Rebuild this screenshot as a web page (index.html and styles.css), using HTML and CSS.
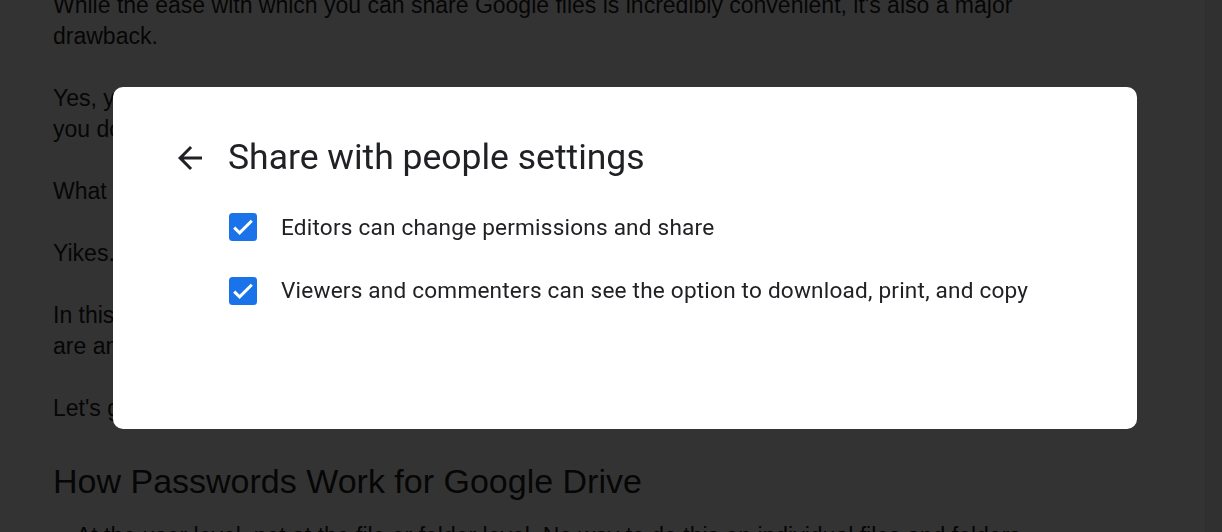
FILE: index.html
```html
<!DOCTYPE html>
<html lang="en">
<head>
<meta charset="utf-8">
<title>Share with people settings</title>
<link rel="stylesheet" href="styles.css">
</head>
<body>
<div class="page">
  <main class="article">
    <p>While the ease with which you can share Google files is incredibly convenient, it's also a major drawback.</p>
    <p>Yes, you can limit who has access to files and folders, but there's no password option, so if<br>you don't watch your sharing settings, anyone with the link might see your documents.</p>
    <p>What happens when someone forwards a link to a confidential file?</p>
    <p>Yikes.</p>
    <p>In this guide, we'll walk through how Google Drive handles security and the workarounds<br>are and aren't worth your time.</p>
    <p>Let's get started.</p>
    <h2>How Passwords Work for Google Drive</h2>
    <ul>
      <li>At the user level, not at the file or folder level. No way to do this on individual files and folders.</li>
    </ul>
  </main>
  <div class="scrolltrack"></div>
</div>

<div class="overlay"></div>

<section class="dialog" role="dialog" aria-labelledby="dlg-title">
  <header class="dialog-head">
    <button class="back" aria-label="Back">
      <svg viewBox="0 0 24 24" width="36" height="36"><path d="M20 11H7.83l5.59-5.59L12 4l-8 8 8 8 1.41-1.41L7.83 13H20v-2z" fill="#202124"/></svg>
    </button>
    <h1 id="dlg-title" class="dialog-title">Share with people settings</h1>
  </header>
  <div class="options">
    <label class="option">
      <svg class="check" viewBox="0 0 28 28" width="28" height="28"><rect x="0" y="0" width="28" height="28" rx="3.5" fill="#1a73e8"/><polyline points="5.2,14.6 10.6,19.8 22.8,7.8" fill="none" stroke="#fff" stroke-width="3"/></svg>
      <span>Editors can change permissions and share</span>
    </label>
    <label class="option">
      <svg class="check" viewBox="0 0 28 28" width="28" height="28"><rect x="0" y="0" width="28" height="28" rx="3.5" fill="#1a73e8"/><polyline points="5.2,14.6 10.6,19.8 22.8,7.8" fill="none" stroke="#fff" stroke-width="3"/></svg>
      <span>Viewers and commenters can see the option to download, print, and copy</span>
    </label>
  </div>
</section>
</body>
</html>
```

FILE: styles.css
```css
html, body {
  margin: 0;
  padding: 0;
  height: 100%;
  overflow: hidden;
  background: #fff;
}

.page {
  display: flex;
  height: 100vh;
}

.article {
  flex: 1;
  padding-left: 53px;
  margin-top: -10px;
  font-family: "Liberation Sans", Arial, sans-serif;
  font-size: 23px;
  line-height: 31px;
  color: #222;
}

.article p {
  margin: 0 0 31px;
  max-width: 1020px;
}

.article h2 {
  font-size: 34px;
  font-weight: normal;
  line-height: 38px;
  margin: 38px 0 21px;
}

.article ul {
  margin: 0;
  padding-left: 23px;
}

.article li::marker {
  font-size: 14px;
}

.scrolltrack {
  width: 16px;
  flex: none;
  background: #f1f1f1;
  border-left: 1px solid #e4e4e4;
}

.overlay {
  position: fixed;
  inset: 0;
  background: rgba(0, 0, 0, 0.8);
}

.dialog {
  position: fixed;
  left: 113px;
  top: 87px;
  width: 1024px;
  height: 342px;
  box-sizing: border-box;
  background: #fff;
  border-radius: 10px;
  padding: 48px 0 0 0;
  font-family: Roboto, "Noto Sans", sans-serif;
  color: #202124;
}

.dialog-head {
  display: flex;
  align-items: center;
  height: 45px;
  padding-left: 59px;
  gap: 20px;
}

.back {
  display: flex;
  width: 36px;
  height: 36px;
  padding: 0;
  border: 0;
  background: none;
}

.dialog-title {
  margin: 0;
  font-size: 35.5px;
  font-weight: 400;
  line-height: 45px;
  color: #202124;
}

.options {
  display: flex;
  flex-direction: column;
  gap: 19.5px;
  margin-top: 25px;
  padding-left: 116px;
}

.option {
  display: flex;
  align-items: center;
  gap: 24px;
  height: 44px;
  font-size: 22.6px;
  letter-spacing: 0.2px;
  color: #202124;
}

.check {
  flex: none;
}
```
